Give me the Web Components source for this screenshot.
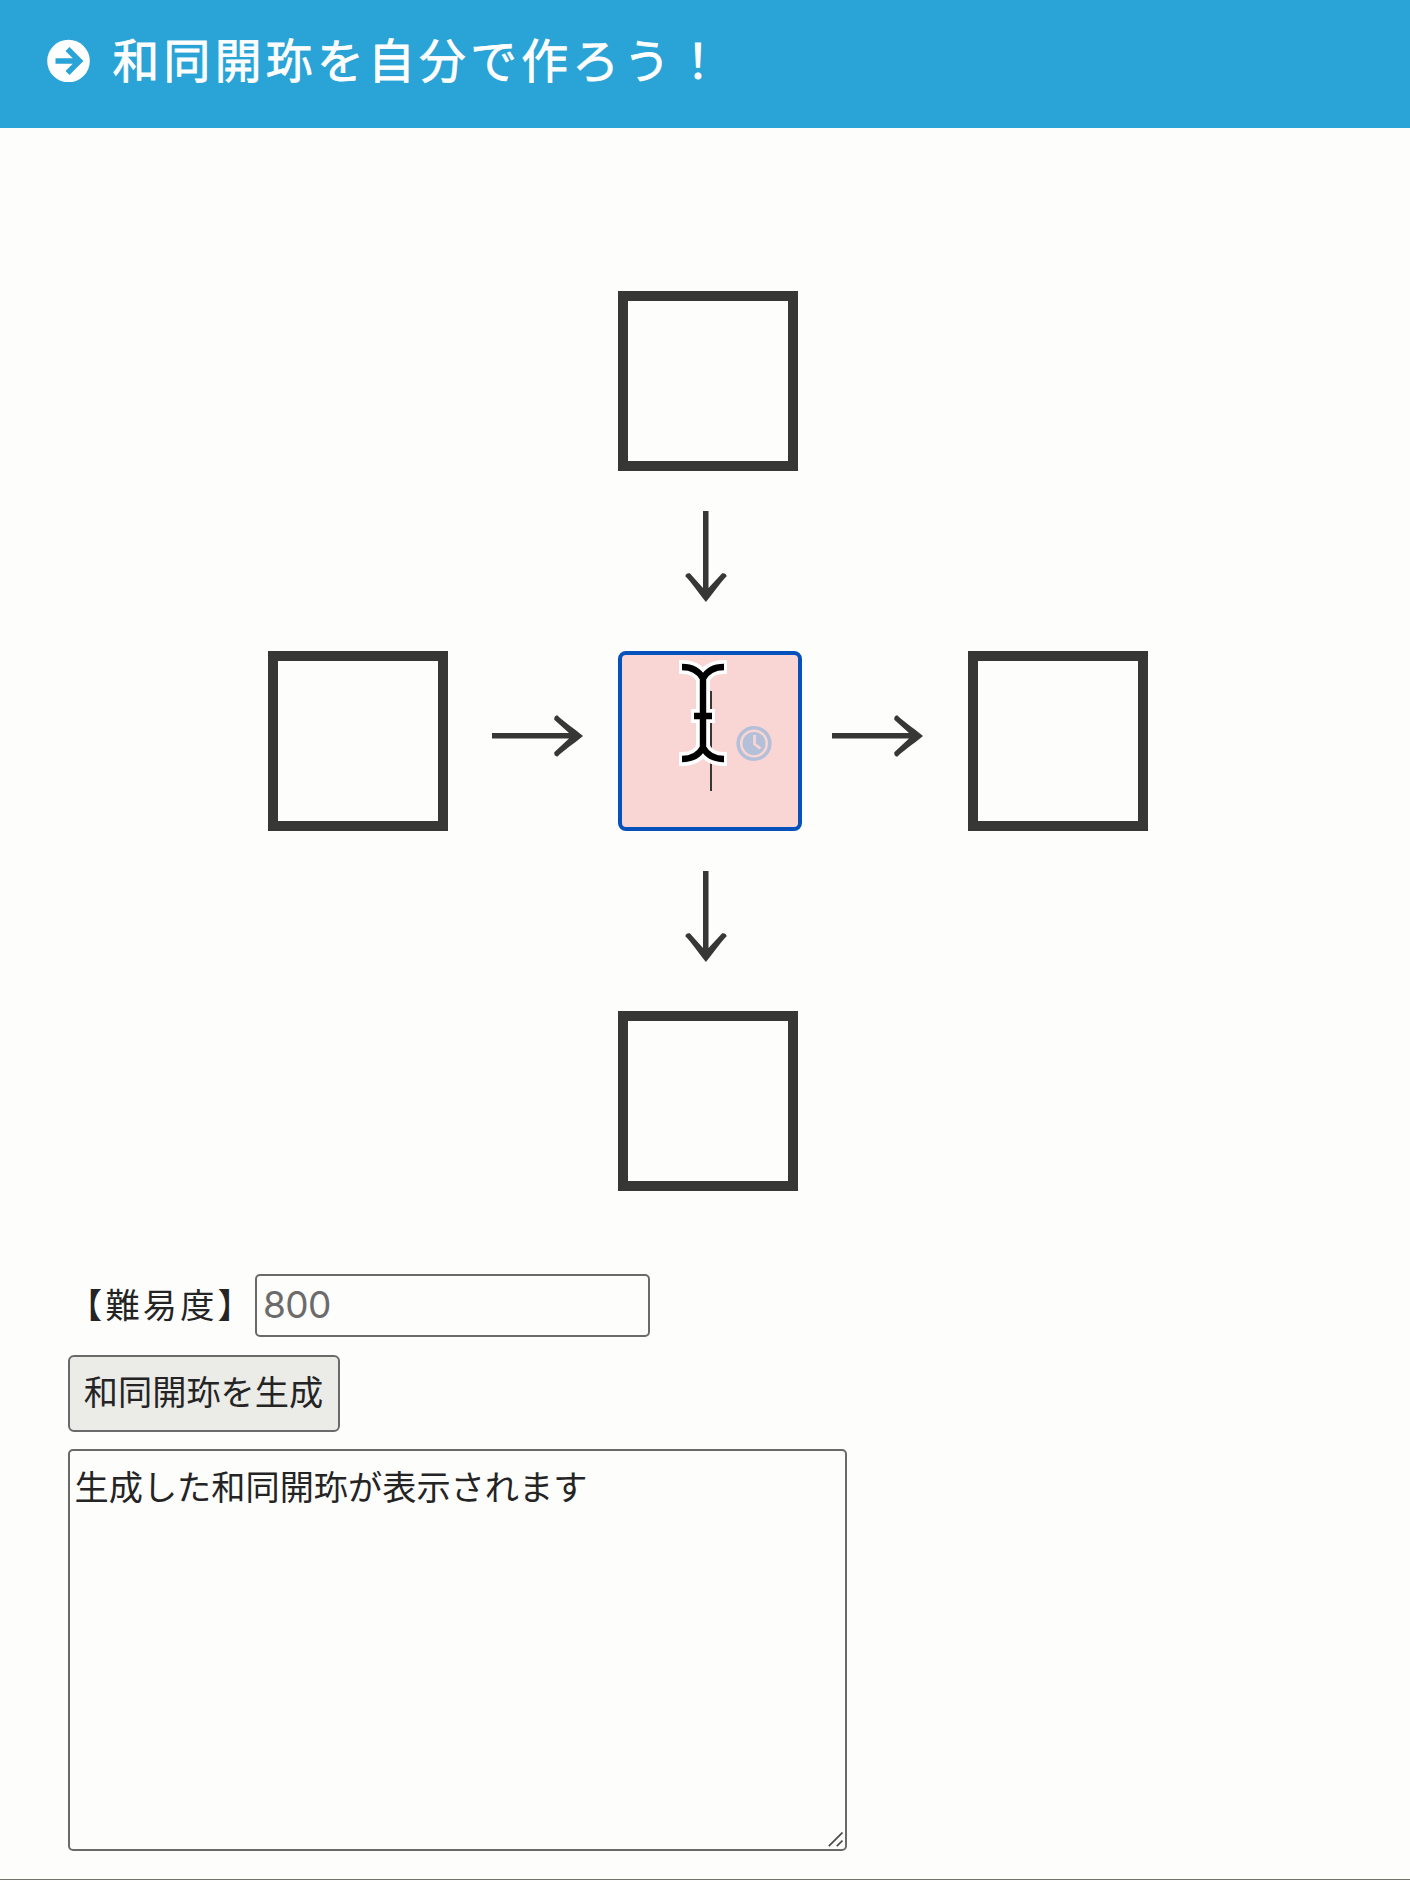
<!DOCTYPE html>
<html lang="ja">
<head>
<meta charset="utf-8">
<title>和同開珎を自分で作ろう！</title>
<style>
html,body{margin:0;padding:0}
body{background:#fdfdfb;color:#242424;font-family:"Noto Sans CJK JP",sans-serif;font-size:34.2px;width:1410px;height:1880px;overflow:hidden}
</style>
</head>
<body>
<wado-page></wado-page>
<script>
const define = (name, html, setup) => {
  const t = document.createElement('template');
  t.innerHTML = html;
  customElements.define(name, class extends HTMLElement {
    constructor() {
      super();
      this.attachShadow({mode: 'open'}).append(t.content.cloneNode(true));
    }
    connectedCallback() { if (setup) setup(this); }
  });
};

define('page-header', `
<style>
:host{display:flex;align-items:flex-start;box-sizing:border-box;height:128px;padding:39px 0 0 47px;background:#2aa4d6;color:#fefefe}
svg{display:block;width:43px;height:43px;flex:none}
h1{margin:-6px 0 0 22.5px;font-weight:400;font-size:46.8px;line-height:50px;letter-spacing:4.3px;white-space:nowrap;-webkit-text-stroke:.8px currentColor}
</style>
<svg viewBox="0 0 43 43"><circle cx="21.5" cy="22" r="21.3" fill="#fefefe"/><path d="M8.5 22H31M20.5 10L32.5 22L20.5 34" fill="none" stroke="#2aa4d6" stroke-width="5.6"/></svg>
<h1><slot></slot></h1>`);

define('kanji-cell', `
<style>
:host{display:block;box-sizing:border-box;width:180px;height:180px;border:10px solid #373735}
</style>`);

define('flow-arrow', `
<style>
:host{display:flex;width:100%;height:100%}
svg{display:block;width:91px;height:42px;margin:64px 0 0 44px}
:host([near]) svg{margin-left:34px}
:host([down]) svg{width:42px;height:91px;margin:40px 0 0 67px}
</style>
<svg viewBox="0 0 91 42"><path d="M0 18H77L62.3 4.8Q61.8 1 65.2 .3C72 7 80 12 91 20.9C80 30 72 35 65.2 41.7Q61.8 41 62.3 37.2L77 23.5H0Z" fill="#373735"/></svg>`,
  el => {
    if (el.hasAttribute('down')) {
      const svg = el.shadowRoot.querySelector('svg');
      svg.setAttribute('viewBox', '0 0 42 91');
      svg.querySelector('path').setAttribute('transform', 'matrix(0 1 1 0 0 0)');
    }
  });

define('active-cell', `
<style>
:host{display:block;position:relative;box-sizing:border-box;width:184px;height:180px;border:4px solid #0552bd;border-radius:8px;background:#f9d6d3}
svg{position:absolute;left:-4px;top:-4px;width:184px;height:180px}
</style>
<svg viewBox="618 651 184 180">
<path d="M711 691V791" stroke="#373735" stroke-width="2"/>
<g fill="none">
<path d="M682 667C693 667 699 671 703 678.5C707 671 713 667 724 667M682 759C693 759 699 755 703 747.5C707 755 713 759 724 759M703 677V749M694 716H712" stroke="#fefefe" stroke-width="14" stroke-linejoin="round"/>
<path d="M679 667H684M722 667H727M679 759H684M722 759H727M691 716H715" stroke="#fefefe" stroke-width="14" stroke-linejoin="round"/>
<path d="M682 667C693 667 699 671 703 678.5C707 671 713 667 724 667M682 759C693 759 699 755 703 747.5C707 755 713 759 724 759M703 676V750M694 716H712" stroke="#000" stroke-width="6.4"/>
</g>
<circle cx="754" cy="743.5" r="15.8" fill="none" stroke="#b4bfd9" stroke-width="3.6"/>
<circle cx="754" cy="743.5" r="11.5" fill="#b4bfd9"/>
<path d="M754.5 735V744L760.5 748.5" fill="none" stroke="#f9d6d3" stroke-width="2.8"/>
</svg>`);

define('coin-board', `
<style>
:host{display:grid;grid-template-columns:180px 170px 180px 170px 180px;grid-template-rows:repeat(5,180px);padding:163px 0 0 268px}
.mid{grid-column:3}
</style>
<kanji-cell class="mid"></kanji-cell>
<flow-arrow class="mid" down></flow-arrow>
<kanji-cell style="grid-column:1"></kanji-cell><flow-arrow></flow-arrow><active-cell></active-cell><flow-arrow near></flow-arrow><kanji-cell></kanji-cell>
<flow-arrow class="mid" down></flow-arrow>
<kanji-cell class="mid"></kanji-cell>`);

define('level-field', `
<style>
:host{display:flex;align-items:center;height:63px}
label{letter-spacing:3.2px;line-height:50px;width:187px;padding-bottom:6px;white-space:nowrap}
.box{box-sizing:border-box;width:395px;height:63px;border:2px solid #6a6a6a;border-radius:5px;padding-left:6px;font:400 37px/57px Inter,sans-serif;letter-spacing:-.6px;color:#6b6b6b}
</style>
<label><slot></slot></label><div class="box"><slot name="value"></slot></div>`);

define('make-button', `
<style>
:host{display:block;margin-top:18px}
button{display:block;box-sizing:border-box;width:272px;height:77px;padding:0 1px 6px 0;border:2px solid #6a6a6a;border-radius:6px;background:#ebebe7;color:inherit;font:inherit;line-height:67px;white-space:nowrap}
</style>
<button><slot></slot></button>`);

define('result-area', `
<style>
:host{display:flex;flex-direction:column;justify-content:space-between;box-sizing:border-box;width:779px;height:402px;margin-top:17px;border:2px solid #6a6a6a;border-radius:5px;padding:8.5px 2px 2px 4.5px}
div{line-height:50px;white-space:nowrap}
svg{display:block;width:15px;height:15px;align-self:flex-end}
</style>
<div><slot></slot></div>
<svg viewBox="0 0 15 15"><path d="M.8 14.2L14.5 .5M8.8 14.2L14.5 8.5" stroke="#4a4a4a" stroke-width="1.7"/></svg>`);

define('wado-page', `
<style>
:host{display:flex;flex-direction:column;box-sizing:border-box;height:1880px;border-bottom:1px solid #73736c}
form{display:flex;flex-direction:column;align-items:flex-start;padding:83px 0 0 68px}
</style>
<page-header>和同開珎を自分で作ろう！</page-header>
<coin-board></coin-board>
<form>
<level-field>【難易度】<span slot="value">800</span></level-field>
<make-button>和同開珎を生成</make-button>
<result-area>生成した和同開珎が表示されます</result-area>
</form>`);
</script>
</body>
</html>
